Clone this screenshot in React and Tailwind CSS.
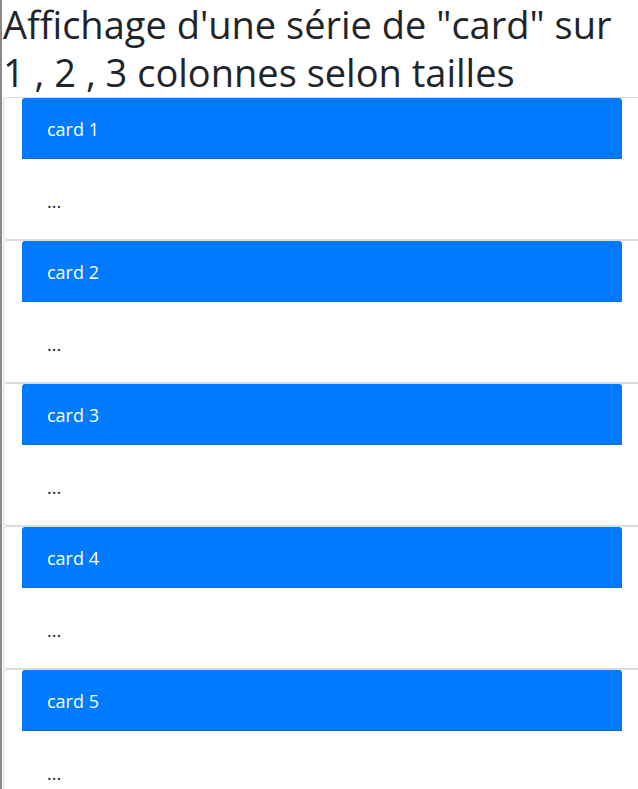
import React from 'react';

const cards = ['card 1', 'card 2', 'card 3', 'card 4', 'card 5'];

function Card({ title }) {
  return (
    <div className="border-t border-l border-b border-[#dcdcdc] rounded-l-[4px] w-[640px]">
      <div className="ml-[18px] w-[600px] h-[61px] bg-[#007bff] rounded-t-[3px] border-b border-[#0a6fdb] flex items-center pl-[25px] pt-[3px] text-white text-[18px]">
        {title}
      </div>
      <div className="h-[80px] pl-[43px] pt-[30px] text-[18px] leading-[24px] text-[#212529]">
        ...
      </div>
    </div>
  );
}

export default function App() {
  return (
    <div className="min-h-[789px] w-[638px] overflow-hidden bg-white border-l-2 border-[#8a8a8a] font-['Open_Sans',sans-serif]">
      <h1 className="text-[38px] leading-[48px] text-[#212529] pl-[1px] font-normal">
        Affichage d'une série de "card" sur 1 , 2 , 3 colonnes selon tailles
      </h1>
      <div className="flex flex-col pl-[1px] pt-[1px]">
        {cards.map((c) => (
          <Card key={c} title={c} />
        ))}
      </div>
    </div>
  );
}
